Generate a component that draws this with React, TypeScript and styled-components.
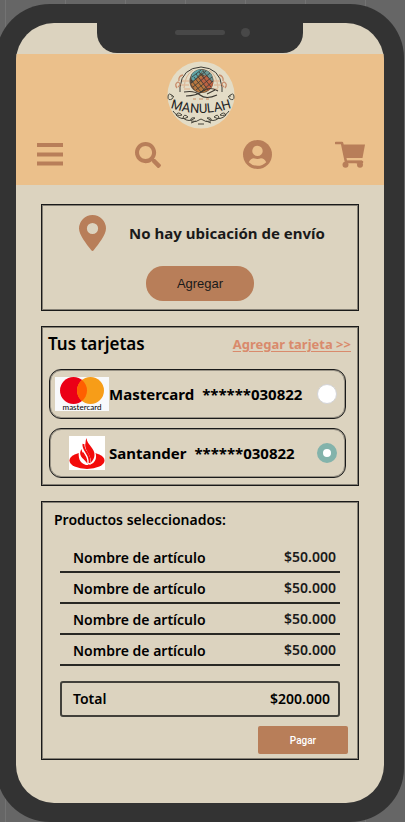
import React, { useState } from "react";
import styled, { createGlobalStyle } from "styled-components";
import { FaSearch } from "react-icons/fa";

const ink = "#1a1a1a";
const sand = "#dcd3bf";
const clay = "#b87e59";

const GlobalStyle = createGlobalStyle`
  *, *::before, *::after { box-sizing: border-box; }
  body {
    margin: 0;
    overflow-x: hidden;
    font-family: "Noto Sans", sans-serif;
    color: #000;
    background: #666 repeating-linear-gradient(90deg, transparent 0 5px, #737373 5px 6px, transparent 6px 60px);
  }
  h1, h2, p { margin: 0; }
  button { border: 0; cursor: pointer; }
`;

const Phone = styled.div`
  margin: 4px 1px 0 -4px;
  padding: 19px 20px;
  border-radius: 54px;
  background: #333;
`;

const Screen = styled.main`
  overflow: hidden;
  border-radius: 38px;
  background: ${sand};
  padding-bottom: 43px;
`;

const StatusBar = styled.div`
  display: flex;
  justify-content: center;
  padding-bottom: 1px;
`;

const Notch = styled.div`
  display: flex;
  align-items: center;
  justify-content: flex-end;
  gap: 16px;
  width: 206px;
  height: 30px;
  padding: 0 53px 12px 0;
  border-radius: 0 0 20px 20px;
  background: #333;
`;

const Speaker = styled.span`
  width: 50px;
  height: 5px;
  border-radius: 3px;
  background: #484848;
`;

const Camera = styled.span`
  width: 9px;
  height: 9px;
  border-radius: 50%;
  background: #484848;
`;

const Header = styled.header`
  display: flex;
  flex-direction: column;
  align-items: center;
  gap: 11px;
  padding: 7px 19px 16px 21px;
  background: #ebc08b;
`;

const Nav = styled.nav`
  display: flex;
  align-items: center;
  justify-content: space-between;
  width: 100%;
`;

const NavButton = styled.button<{ $lead?: number }>`
  display: flex;
  padding: 0 0 0 ${(p) => p.$lead ?? 0}px;
  background: none;
  color: ${clay};
`;

const Content = styled.div`
  display: flex;
  flex-direction: column;
  gap: 15px;
  padding: 19px 25px 0;
`;

const Panel = styled.section<{ $pad: string }>`
  padding: ${(p) => p.$pad};
  border: 1px solid ${ink};
  box-shadow: inset 0 0 0 1px rgba(26, 26, 26, 0.45);
`;

const Location = styled.div`
  display: flex;
  align-items: center;
  justify-content: center;
  gap: 23px;
  padding-left: 4px;
`;

const LocationTitle = styled.h2`
  font-size: 15px;
  line-height: 20px;
  font-weight: 700;
  white-space: nowrap;
  color: ${ink};
`;

const AddButton = styled.button`
  display: block;
  width: 108px;
  height: 35px;
  margin: 15px auto 0;
  border-radius: 17px;
  background: ${clay};
  color: ${ink};
  font: 13px "Liberation Sans", sans-serif;
`;

const PanelHead = styled.div`
  display: flex;
  align-items: center;
  justify-content: space-between;
`;

const CardsTitle = styled.h2`
  font-size: 17px;
  line-height: 24px;
  font-weight: 600;
`;

const AddLink = styled.a`
  font-size: 13px;
  line-height: 20px;
  font-weight: 700;
  color: #d98a6c;
  text-underline-offset: 2px;
`;

const CardList = styled.div`
  display: flex;
  flex-direction: column;
  gap: 9px;
  margin: 13px 5px 0 1px;
`;

const CardOption = styled.label`
  display: flex;
  align-items: center;
  height: 50px;
  padding: 0 8px 0 5px;
  border: 1px solid ${ink};
  border-radius: 12px;
  box-shadow: inset 0 0 0 1px rgba(26, 26, 26, 0.35);
  font-size: 15px;
  line-height: 20px;
  font-weight: 700;
  cursor: pointer;
`;

const LogoSlot = styled.span`
  display: flex;
  justify-content: center;
  flex: 0 0 54px;
`;

const BankSlot = styled(LogoSlot)`
  justify-content: flex-end;
  padding-right: 4px;
`;

const CardNumber = styled.span`
  flex: 1;
  margin-left: 8px;
`;

const Radio = styled.input`
  appearance: none;
  width: 20px;
  height: 20px;
  margin: 0;
  border: 1px solid #d3d4d8;
  border-radius: 50%;
  background: #fff;
  &:checked { border: 6px solid #83b3ab; }
`;

const ProductsTitle = styled.h2`
  padding-left: 11px;
  font-size: 14px;
  line-height: 18px;
  font-weight: 600;
`;

const Products = styled.table`
  width: calc(100% - 34px);
  margin: 12px 17px 0;
  border-collapse: collapse;
  font-size: 14px;
  line-height: 18px;
  font-weight: 600;
`;

const Name = styled.td`
  height: 31px;
  padding: 6px 0 3px 13px;
  border-bottom: 2px solid #292824;
`;

const Price = styled(Name)`
  padding: 5px 4px 4px 0;
  text-align: right;
  color: ${ink};
`;

const Total = styled.div`
  display: flex;
  align-items: center;
  justify-content: space-between;
  height: 36px;
  margin: 15px 17px 0;
  padding: 0 8px 0 11px;
  border: 2px solid #42403a;
  border-radius: 3px;
  font-size: 14px;
  line-height: 18px;
  font-weight: 600;
`;

const PayButton = styled.button`
  display: block;
  width: 90px;
  height: 28px;
  margin: 9px 9px 0 auto;
  border-radius: 2px;
  background: ${clay};
  color: #fff;
  font: 500 10px Roboto, sans-serif;
`;

const ManulahLogo = () => (
  <svg width="68" height="68" viewBox="0 0 68 68" role="img" aria-label="Manulah" fill="none">
    <circle cx="34" cy="34" r="33.5" fill="#e3dcc6" />
    <path d="M13 31V26Q15 7 34 6Q53 7 55 26V31" stroke="#3b3a34" strokeWidth="1" />
    <path d="M17 27Q18 14 26 9M51 27Q50 14 42 9" stroke="#d8b28f" strokeWidth="1" />
    <path d="M10 27q-3-4 1-6q4 2 0 5M12 20q-1-5 4-6M58 27q3-4-1-6q-4 2 0 5M56 20q1-5-4-6" stroke="#c88d6c" strokeWidth="1.3" />
    <path d="M15 20h7M14 24h8M17 28h6M46 20h7M47 24h7M46 28h5" stroke="#dfbc9c" strokeWidth="1.4" />
    <circle cx="34.500" cy="20" r="12" fill="#624c3b" />
    <path d="M25 13Q30 7 36 9L27 20Q23 19 25 13Z" fill="#5fa3a4" />
    <path d="M37 9Q46 10 46 21L34 12Z" fill="#6b9896" />
    <path d="M24 23L34 13L43 27Q36 35 28 29Z" fill="#b8773f" />
    <path d="M39 14L46 21Q46 27 41 30L32 18Z" fill="#bd6142" />
    <path d="M24 19L34 31M27 16L38 30M29 13L41 29M32 11L44 26M36 10L45 21M25 16L34 9M24 22L39 10M26 26L43 12M29 29L45 16M34 31L46 20" stroke="#393b37" strokeWidth=".8" />
    <path d="M17 31Q27 29 33 34T50 34M19 35Q29 35 36 30T51 30M40 33l8-4" stroke="#3b3730" strokeWidth="1.1" />
    <path d="M26 38h3M32 38h4M39 38h3" stroke="#ca8d67" />
    <path id="manulah-arc" d="M4 47Q34 57 64 47" />
    <text fill="#24231f" fontFamily="Roboto, sans-serif" fontSize="13" fontWeight="400" textAnchor="middle">
      <textPath href="#manulah-arc" startOffset="50%">MANULAH</textPath>
    </text>
    <path d="M7 36q-6-6-6 0q0 4 4 2q3-4-1-3M61 36q6-6 6 0q0 4-4 2q-3-4 1-3" stroke="#4b493f" />
    <path d="M6 50q4 6 9 4q-4-4-6 0q6 6 12 2q-4-4-5 1q6 5 12 0q-5-1-4 3q5 2 10-2q5 4 10 2q1-4-4-3q6 5 12 0q-1-5-5-1q6 4 12-2q-2-4-6 0q5 2 9-4M24 62l5-2M31 63h6M39 60l5 2" stroke="#454339" />
  </svg>
);

const MenuIcon = () => (
  <svg width="26" height="23" viewBox="0 0 26 23" fill="currentColor">
    <path d="M0 0h26v4H0zM0 9.500h26v4H0zM0 18.500h26v4H0z" />
  </svg>
);

const UserIcon = () => (
  <svg width="29" height="29" viewBox="2 2 20 20">
    <circle cx="12" cy="12" r="10" fill="currentColor" />
    <circle cx="12" cy="9.500" r="3.600" fill="#ebc08b" />
    <path d="M6 17.300Q7.300 14.600 9.600 14.500Q12 15.600 14.400 14.500Q16.700 14.600 18 17.300Q15.500 19.800 12 19.800T6 17.300Z" fill="#ebc08b" />
  </svg>
);

const CartIcon = () => (
  <svg width="30" height="27" viewBox="0 0 30 27" fill="currentColor">
    <path d="M1 2h6l4 19H27" fill="none" stroke="currentColor" strokeWidth="2.600" strokeLinecap="round" strokeLinejoin="round" />
    <path d="M7 3.500h23L27.500 17H9.500z" />
    <path d="M10.500 19.500H27V23h-2.500z" />
    <circle cx="10.500" cy="23.700" r="3" />
    <circle cx="25" cy="23.700" r="3" />
  </svg>
);

const PinIcon = () => (
  <svg width="27" height="36" viewBox="0 0 27 36">
    <path fill={clay} fillRule="evenodd" d="M13.500 0A13.500 13.500 0 0 1 27 13.500C27 20 19.500 29 14.700 35.300Q13.500 36.600 12.300 35.300C7.500 29 0 20 0 13.500A13.500 13.500 0 0 1 13.500 0Zm0 7.900a5.600 5.600 0 1 0 0 11.200a5.600 5.600 0 1 0 0-11.200Z" />
  </svg>
);

const MastercardLogo = () => (
  <svg width="54" height="34" viewBox="0 0 54 34" aria-hidden="true">
    <rect width="54" height="34" fill="#f8f9fb" />
    <circle cx="18.500" cy="13.500" r="13.500" fill="#eb0017" />
    <circle cx="35.500" cy="13.500" r="13.500" fill="#f79d18" />
    <path d="M27 3A13.500 13.500 0 0 1 27 24A13.500 13.500 0 0 1 27 3Z" fill="#ff5f00" />
    <text x="27" y="33" textAnchor="middle" fontFamily="Lato, sans-serif" fontWeight="400" fontSize="8" fill="#000">mastercard</text>
  </svg>
);

const SantanderLogo = () => (
  <svg width="36" height="34" viewBox="0 0 36 34" aria-hidden="true">
    <rect width="36" height="34" fill="#fff" />
    <ellipse cx="18" cy="24.500" rx="17.500" ry="8.500" fill="#f30b0b" />
    <path d="M10 14H13C13 20 20 22 19 29H17C10 27 9 21 10 14ZM25 14C29 20 27 27 21 28.500H19Z" fill="#fff" />
    <path d="M17.500 2C18 9 26 12 25.500 19Q25.500 23 21.500 27C23 19 14 14 16.500 7Q16.500 4 17.500 2ZM12.500 13C13 19 20 21 18.500 28C16 23 9.500 21 11.500 15Q12 14 12.500 13Z" fill="#f30b0b" />
    <path d="M14.500 9C13 16 22 19 20 28" fill="none" stroke="#fff" strokeWidth="3.500" />
    <path d="M14.500 8C13.500 15 22 18 20.500 27" fill="none" stroke="#f30b0b" strokeWidth="2" />
  </svg>
);

const products = [1, 2, 3, 4].map((id) => ({ id, name: "Nombre de artículo", price: "$50.000" }));

export default function App() {
  const [card, setCard] = useState("santander");
  return (
    <>
      <GlobalStyle />
      <Phone>
        <Screen>
          <StatusBar>
            <Notch>
              <Speaker />
              <Camera />
            </Notch>
          </StatusBar>
          <Header>
            <ManulahLogo />
            <Nav>
              <NavButton aria-label="Menú"><MenuIcon /></NavButton>
              <NavButton aria-label="Buscar" $lead={9}><FaSearch size={26} /></NavButton>
              <NavButton aria-label="Cuenta" $lead={20}><UserIcon /></NavButton>
              <NavButton aria-label="Carrito"><CartIcon /></NavButton>
            </Nav>
          </Header>
          <Content>
            <Panel $pad="10px 25px 9px">
              <Location>
                <PinIcon />
                <LocationTitle>No hay ubicación de envío</LocationTitle>
              </Location>
              <AddButton>Agregar</AddButton>
            </Panel>
            <Panel $pad="5px 7px 7px 6px">
              <PanelHead>
                <CardsTitle>Tus tarjetas</CardsTitle>
                <AddLink href="#agregar">Agregar tarjeta &gt;&gt;</AddLink>
              </PanelHead>
              <CardList>
                <CardOption>
                  <LogoSlot><MastercardLogo /></LogoSlot>
                  Mastercard
                  <CardNumber>******030822</CardNumber>
                  <Radio type="radio" name="card" checked={card === "mastercard"} onChange={() => setCard("mastercard")} />
                </CardOption>
                <CardOption>
                  <BankSlot><SantanderLogo /></BankSlot>
                  Santander
                  <CardNumber>******030822</CardNumber>
                  <Radio type="radio" name="card" checked={card === "santander"} onChange={() => setCard("santander")} />
                </CardOption>
              </CardList>
            </Panel>
            <Panel $pad="9px 1px 5px">
              <ProductsTitle>Productos seleccionados:</ProductsTitle>
              <Products>
                <tbody>
                  {products.map((p) => (
                    <tr key={p.id}>
                      <Name>{p.name}</Name>
                      <Price>{p.price}</Price>
                    </tr>
                  ))}
                </tbody>
              </Products>
              <Total>
                <span>Total</span>
                <span>$200.000</span>
              </Total>
              <PayButton>Pagar</PayButton>
            </Panel>
          </Content>
        </Screen>
      </Phone>
    </>
  );
}
